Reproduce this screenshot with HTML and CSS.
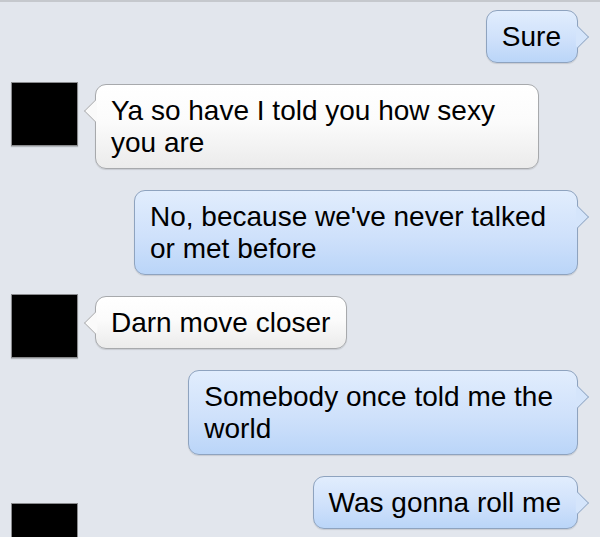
FILE: index.html
```html
<!DOCTYPE html>
<html lang="en">
<head>
  <meta charset="UTF-8">
  <meta name="viewport" content="width=device-width, initial-scale=1.0">
  <title>Messages</title>
  <link rel="stylesheet" href="styles.css">
</head>
<body>
  <div class="thread">
    <div class="msg out">
      <div class="bubble">Sure</div>
    </div>
    <div class="msg in">
      <div class="avatar"></div>
      <div class="bubble">Ya so have I told you how sexy you are</div>
    </div>
    <div class="msg out">
      <div class="bubble">No, because we've never talked or met before</div>
    </div>
    <div class="msg in">
      <div class="avatar"></div>
      <div class="bubble">Darn move closer</div>
    </div>
    <div class="msg out">
      <div class="bubble roomy">Somebody once told me the<br>world</div>
    </div>
    <div class="msg out">
      <div class="bubble">Was gonna roll me</div>
    </div>
    <div class="msg in next">
      <div class="avatar"></div>
    </div>
  </div>
</body>
</html>
```

FILE: styles.css
```css
body {
  margin: 0;
  height: 537px;
  overflow: hidden;
  background: #e2e6ed;
  font-family: "Liberation Sans", Arial, sans-serif;
}

.thread {
  display: flex;
  flex-direction: column;
  gap: 21px;
  padding-top: 8px;
  border-top: 2px solid #c5c8cd;
}

.msg {
  display: flex;
  align-items: flex-start;
}

.msg.out {
  justify-content: flex-end;
  padding-right: 22px;
}

.msg.in {
  padding-left: 11px;
}

.msg.next {
  margin-top: -45px;
}

.avatar {
  flex: none;
  width: 67px;
  height: 64px;
  margin: -2px 17px -14px 0;
  box-sizing: border-box;
  background: #000;
  border: 1px solid #8a8b8e;
  box-shadow: 0 1px 1px rgba(0, 0, 0, 0.2);
}

/* last avatar is cut by the bottom of the screen */
.msg.next .avatar {
  height: 35px;
  margin-bottom: 0;
  border-bottom: 0;
  box-shadow: none;
}

.bubble {
  position: relative;
  max-width: 444px;
  box-sizing: border-box;
  padding: 10px 16px 9px 15px;
  border: 1px solid;
  border-radius: 11px;
  font-size: 28px;
  line-height: 32px;
  color: #000;
  box-shadow: 0 1px 1px rgba(0, 0, 0, 0.12);
}

.bubble.roomy {
  padding-right: 24px;
}

.in .bubble {
  background: linear-gradient(#ffffff, #fbfbfb 45%, #ebebeb);
  border-color: #a7a9ac;
}

.out .bubble {
  background: linear-gradient(#e1edfd, #cfe1fb 55%, #bad5f8);
  border-color: #8ea3bf;
}

/* little pointer on the side of each bubble */
.bubble::after {
  content: "";
  position: absolute;
  top: 18px;
  width: 16px;
  height: 16px;
  box-sizing: border-box;
  border: 0 solid;
  border-color: inherit;
  transform: rotate(45deg);
}

.out .bubble::after {
  right: -9px;
  border-top-width: 1px;
  border-right-width: 1px;
  background: #d5e5fb;
  clip-path: polygon(0 0, 100% 0, 100% 100%, calc(100% - 3px) 100%, 0 3px);
}

.in .bubble::after {
  left: -9px;
  border-bottom-width: 1px;
  border-left-width: 1px;
  background: #fafafa;
  clip-path: polygon(0 0, 0 100%, 100% 100%, 100% calc(100% - 3px), 3px 0);
}
```
